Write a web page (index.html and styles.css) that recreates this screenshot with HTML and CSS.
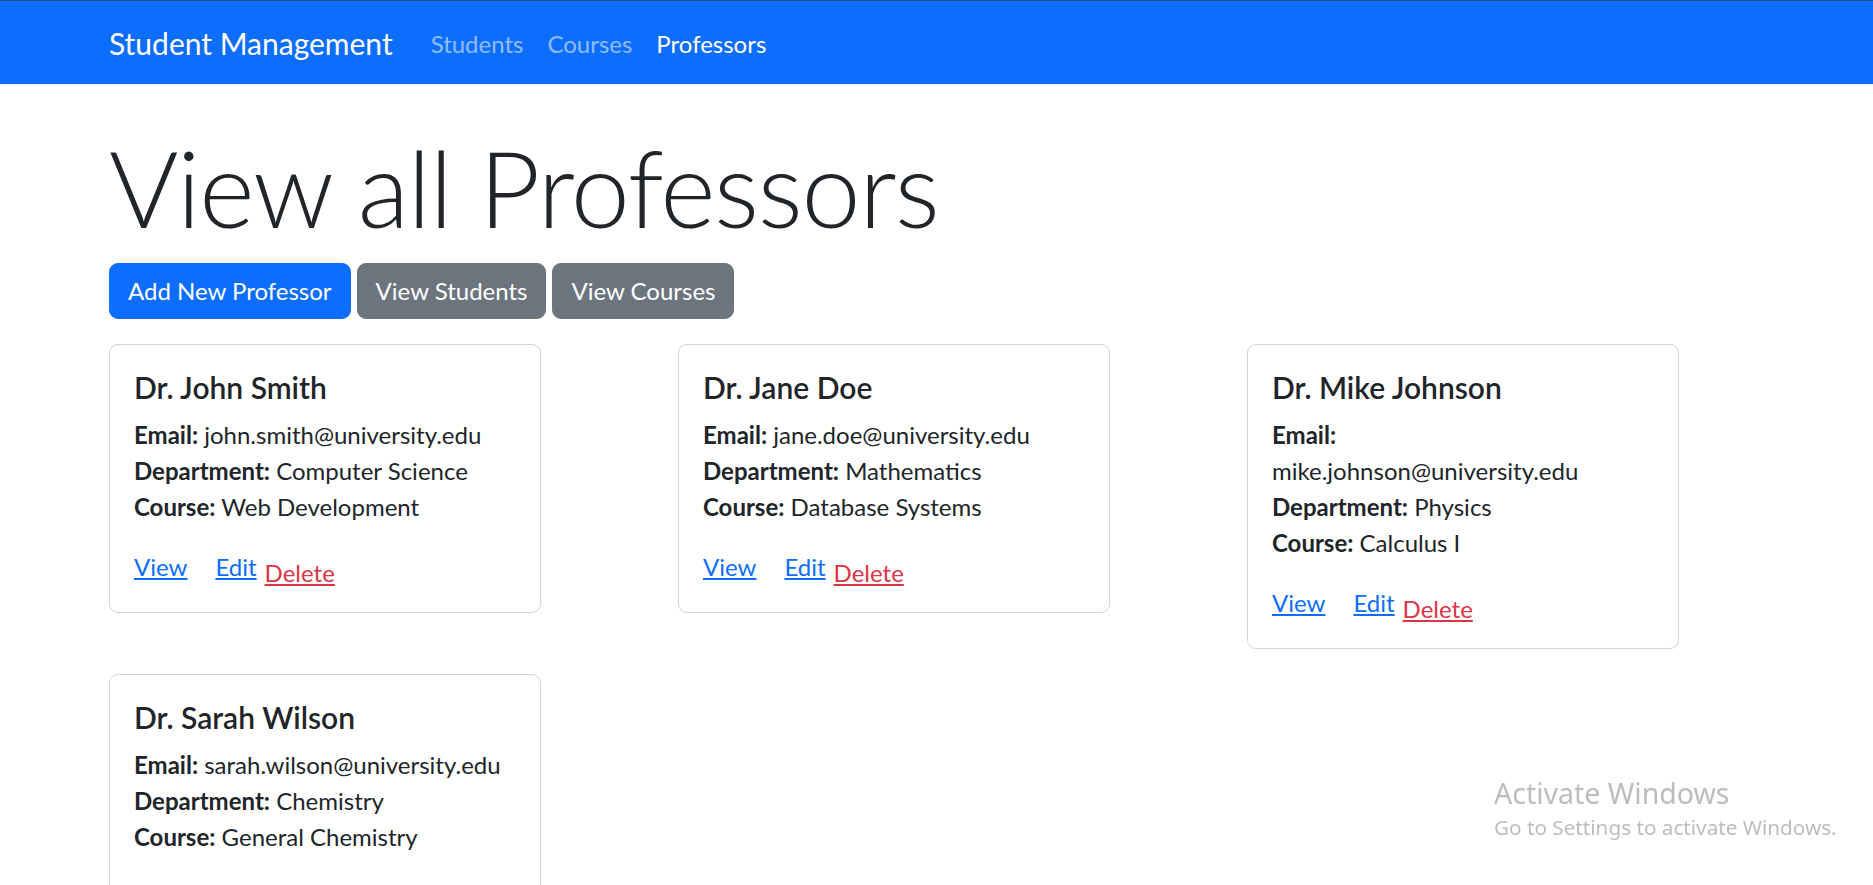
FILE: index.html
```html
<!DOCTYPE html>
<html lang="en">
<head>
<meta charset="utf-8">
<title>View all Professors</title>
<link rel="stylesheet" href="styles.css">
</head>
<body>
<nav class="navbar">
  <div class="container nav-inner">
    <a class="brand" href="#">Student Management</a>
    <ul class="nav-links">
      <li><a class="nav-link" href="#">Students</a></li>
      <li><a class="nav-link" href="#">Courses</a></li>
      <li><a class="nav-link active" href="#">Professors</a></li>
    </ul>
  </div>
</nav>
<main class="container page">
  <h1 class="display">View all Professors</h1>
  <div class="actions">
    <a class="btn btn-primary" href="#">Add New Professor</a>
    <a class="btn btn-secondary" href="#">View Students</a>
    <a class="btn btn-secondary" href="#">View Courses</a>
  </div>
  <div class="card-grid">
    <div class="card">
      <h5 class="card-title">Dr. John Smith</h5>
      <p class="card-text"><strong>Email:</strong> john.smith@university.edu<br><strong>Department:</strong> Computer Science<br><strong>Course:</strong> Web Development</p>
      <div class="card-links"><a class="link link-view" href="#">View</a><a class="link link-edit" href="#">Edit</a><button class="link link-delete" type="button">Delete</button></div>
    </div>
    <div class="card">
      <h5 class="card-title">Dr. Jane Doe</h5>
      <p class="card-text"><strong>Email:</strong> jane.doe@university.edu<br><strong>Department:</strong> Mathematics<br><strong>Course:</strong> Database Systems</p>
      <div class="card-links"><a class="link link-view" href="#">View</a><a class="link link-edit" href="#">Edit</a><button class="link link-delete" type="button">Delete</button></div>
    </div>
    <div class="card">
      <h5 class="card-title">Dr. Mike Johnson</h5>
      <p class="card-text"><strong>Email:</strong><br>mike.johnson@university.edu<br><strong>Department:</strong> Physics<br><strong>Course:</strong> Calculus I</p>
      <div class="card-links"><a class="link link-view" href="#">View</a><a class="link link-edit" href="#">Edit</a><button class="link link-delete" type="button">Delete</button></div>
    </div>
    <div class="card">
      <h5 class="card-title">Dr. Sarah Wilson</h5>
      <p class="card-text"><strong>Email:</strong> sarah.wilson@university.edu<br><strong>Department:</strong> Chemistry<br><strong>Course:</strong> General Chemistry</p>
      <div class="card-links"><a class="link link-view" href="#">View</a><a class="link link-edit" href="#">Edit</a><button class="link link-delete" type="button">Delete</button></div>
    </div>
  </div>
</main>
<div class="watermark">
  <div class="wm-title">Activate Windows</div>
  <div class="wm-sub">Go to Settings to activate Windows.</div>
</div>
</body>
</html>
```
FILE: styles.css
```css
* { box-sizing: border-box; }
html, body { margin: 0; padding: 0; }
body {
  font-family: Lato, "Noto Sans", "Liberation Sans", sans-serif;
  font-size: 24px;
  line-height: 36px;
  color: #212529;
  background: #fff;
  overflow: hidden;
  height: 885px;
}
.container {
  padding-left: 109px;
  padding-right: 90px;
}
.navbar {
  background: #0d6efd;
  border-top: 1px solid #1f4e96;
  height: 84px;
}
.nav-inner {
  display: flex;
  align-items: center;
  height: 83px;
  padding-top: 2px;
}
.brand {
  font-size: 30px;
  line-height: 45px;
  color: #fff;
  text-decoration: none;
  margin-right: 26px;
}
.nav-links {
  display: flex;
  list-style: none;
  margin: 0;
  padding: 0;
}
.nav-link {
  display: block;
  padding: 0 12px;
  color: rgba(255,255,255,0.55);
  text-decoration: none;
  line-height: 36px;
}
.nav-link.active { color: #fff; }

.page { padding-top: 36px; }
.display {
  font-size: 106px;
  font-weight: 300;
  letter-spacing: -1.4px;
  line-height: 134px;
  margin: 0 0 9px;
}
.actions {
  display: flex;
  gap: 6px;
  margin-bottom: 25px;
}
.btn {
  display: inline-block;
  padding: 9px 18px;
  line-height: 36px;
  font-size: 24px;
  border: 1px solid transparent;
  border-radius: 9px;
  color: #fff;
  text-decoration: none;
}
.btn-primary { background: #0d6efd; border-color: #0d6efd; }
.btn-secondary { background: #6c757d; border-color: #6c757d; }

.card-grid {
  display: grid;
  grid-template-columns: repeat(3, 534px);
  column-gap: 35px;
  row-gap: 25px;
  align-items: start;
}
.card {
  width: 432px;
  border: 1px solid #d3d4d5;
  border-radius: 9px;
  padding: 24px 24px 24px;
}
.card-title {
  font-size: 30px;
  line-height: 36px;
  font-weight: 600;
  margin: 0 0 12px;
}
.card-text { margin: 0 0 24px; }
.card-text strong { font-weight: 700; }
.card-links { line-height: 36px; }
.link {
  color: #0d6efd;
  text-decoration: underline;
  font: inherit;
}
.link-view { margin-right: 28px; }
.link-edit { margin-right: 8px; }
.link-delete {
  display: inline-block;
  background: none;
  border: 0;
  padding: 0;
  color: #dc3545;
  line-height: 30px;
  vertical-align: -6px;
  cursor: pointer;
}
.watermark {
  position: fixed;
  left: 1494px;
  top: 777px;
  color: #bdbdbd;
  font-family: "Noto Sans", Lato, sans-serif;
  pointer-events: none;
}
.wm-title { font-size: 28.5px; line-height: 32px; }
.wm-sub { font-size: 20.7px; line-height: 25px; margin-top: 6px; }
```
